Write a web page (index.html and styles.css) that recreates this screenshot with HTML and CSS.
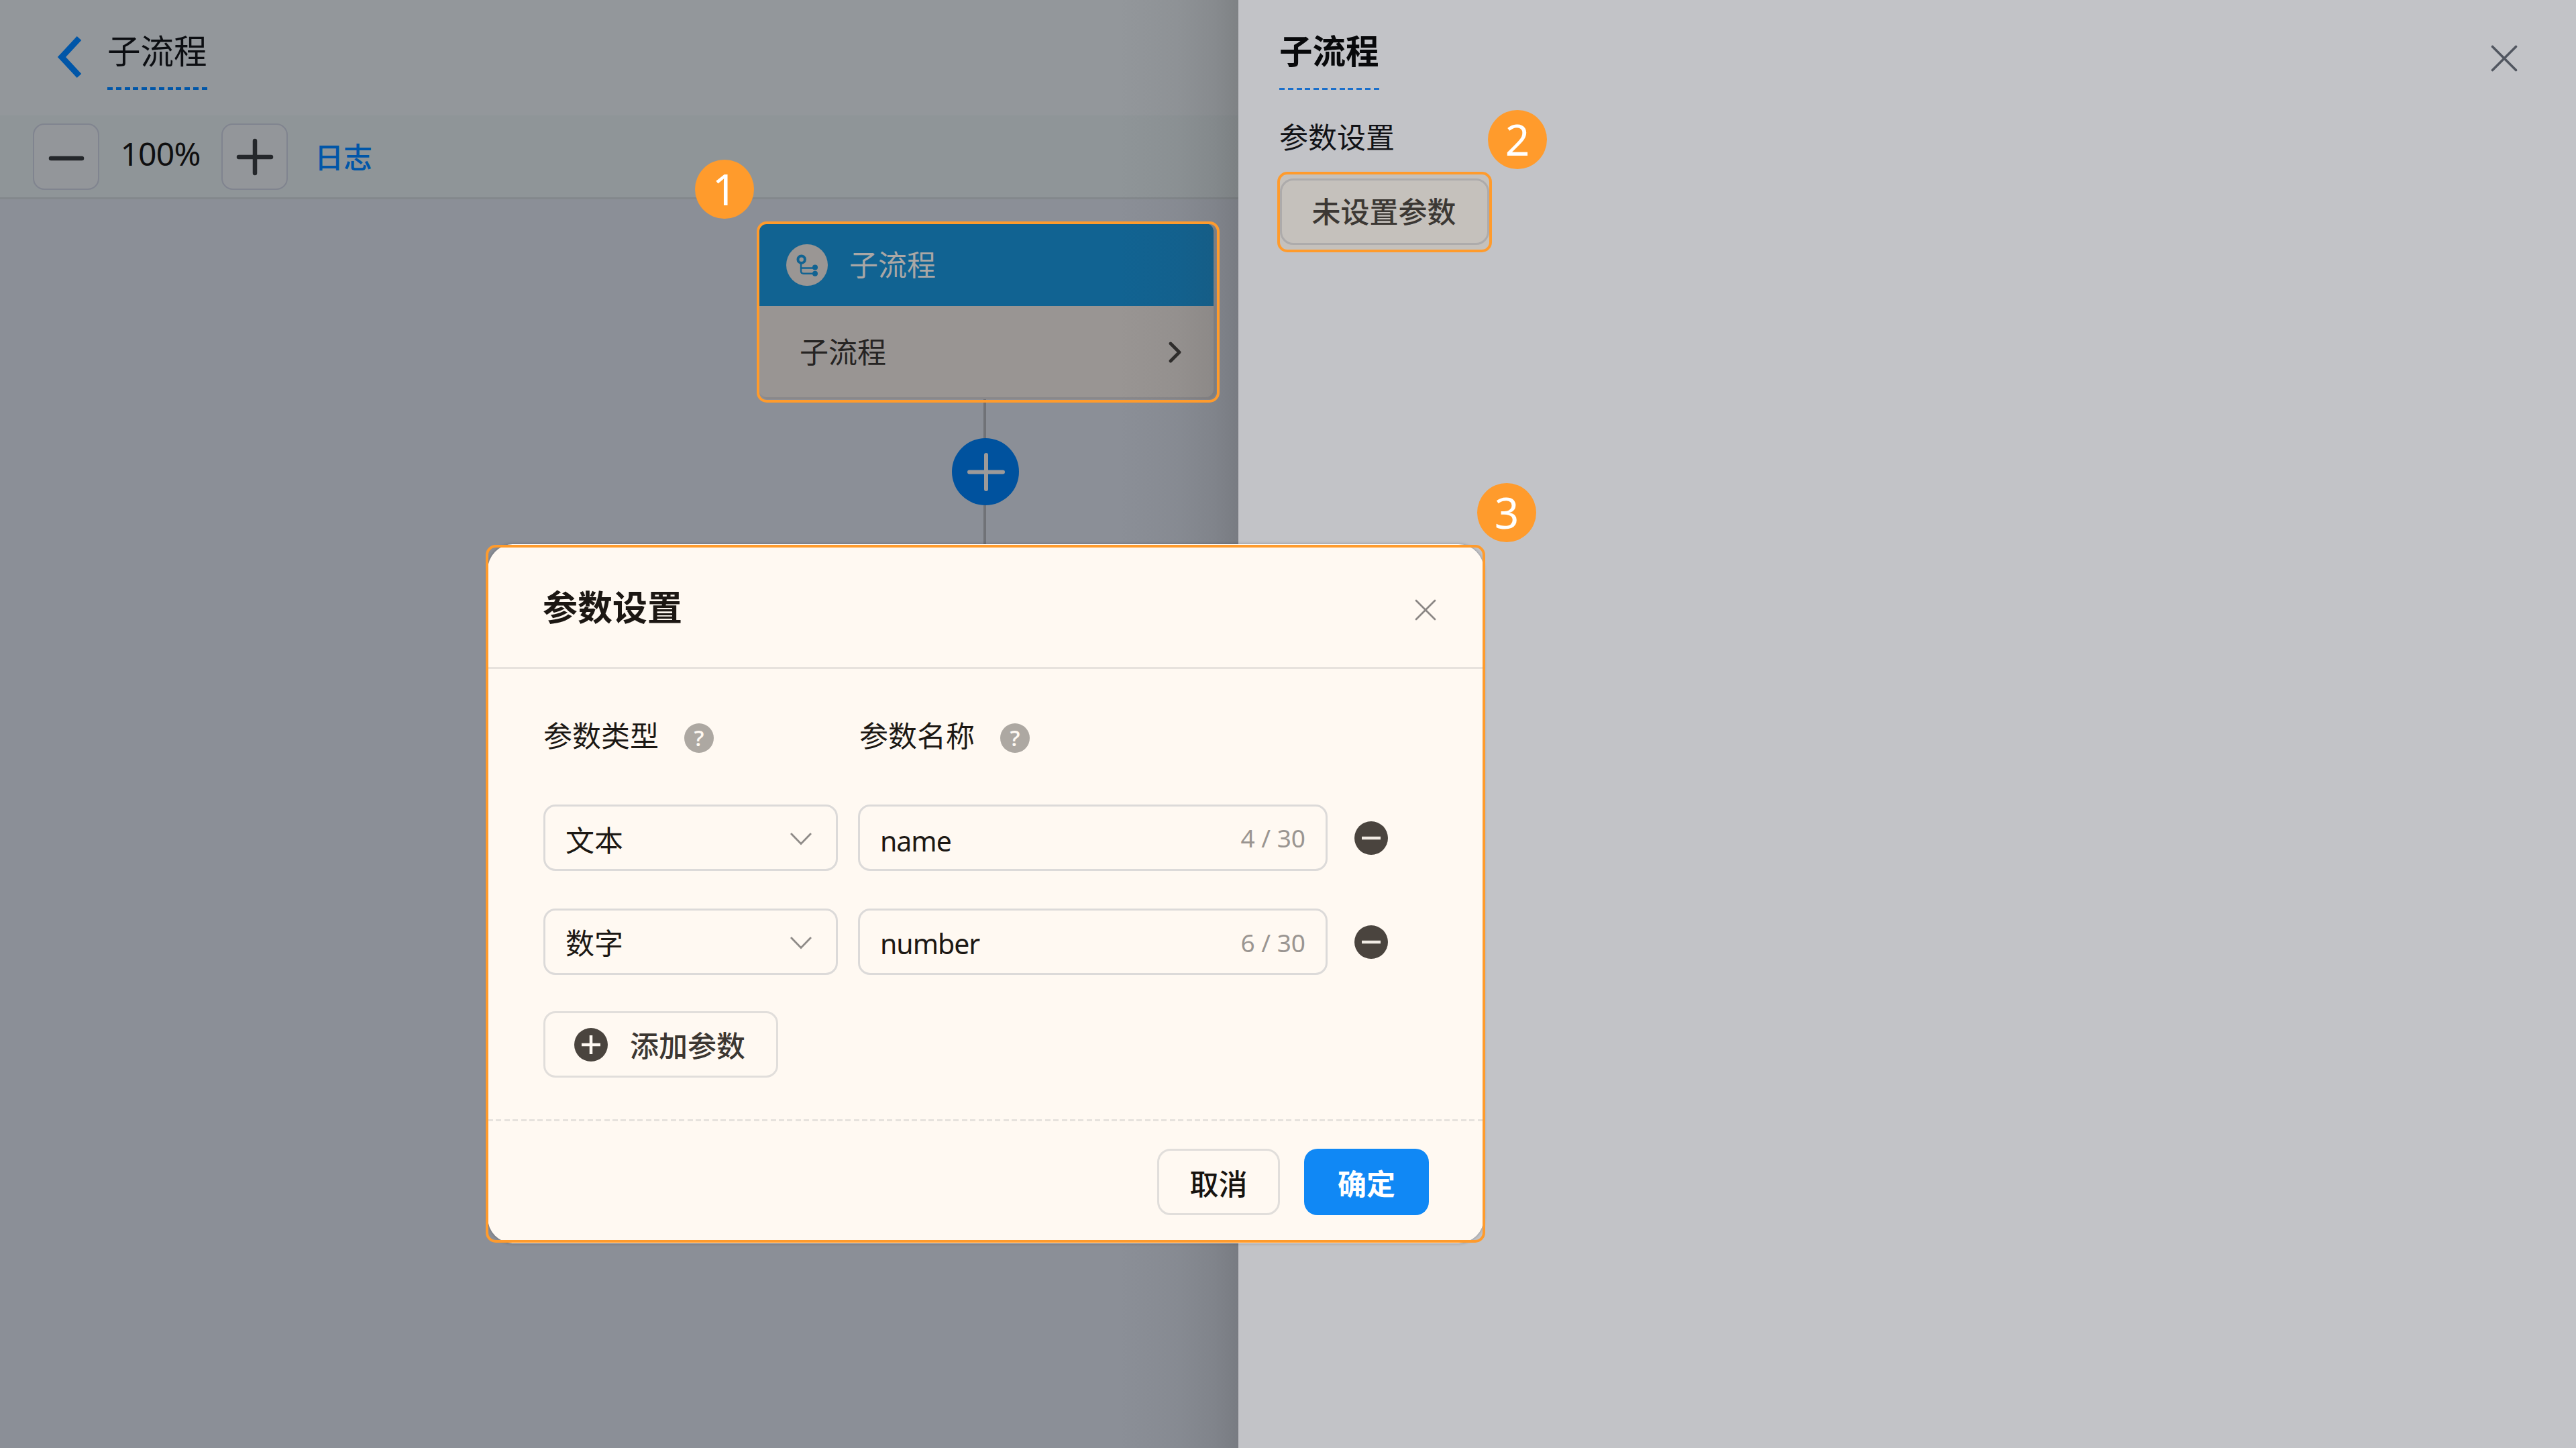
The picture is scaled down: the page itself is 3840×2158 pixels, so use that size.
FILE: index.html
```html
<!DOCTYPE html>
<html lang="zh-CN">
<head>
<meta charset="utf-8">
<title>子流程</title>
<link rel="stylesheet" href="styles.css">
</head>
<body>
<div class="app">
  <main class="editor">
    <header class="topbar">
      <svg class="back" viewBox="0 0 38 64"><path d="M33 4 7 32 33 60" fill="none" stroke="#0056a8" stroke-width="9"/></svg>
      <h1 class="flow-title">子流程</h1>
    </header>
    <div class="toolbar">
      <button class="zoom-btn"><svg viewBox="0 0 60 60"><path d="M7 32H53" stroke="#24272b" stroke-width="6.5" stroke-linecap="round"/></svg></button>
      <span class="zoom-value">100%</span>
      <button class="zoom-btn"><svg viewBox="0 0 60 60"><path d="M6 30H54M30 6V54" stroke="#24272b" stroke-width="6.5" stroke-linecap="round"/></svg></button>
      <a class="log-link">日志</a>
    </div>
    <section class="canvas">
      <div class="connector"></div>
      <div class="node">
        <div class="node-head">
          <svg class="node-icon" viewBox="0 0 62 62">
            <circle cx="31" cy="31" r="31" fill="#9a9694"/>
            <g fill="none" stroke="#116392">
              <circle cx="22.7" cy="22.7" r="5.2" stroke-width="4"/>
              <path d="M22 29V40Q22 43.7 26 43.7H43M22 35.5H43" stroke-width="2.4"/>
            </g>
            <circle cx="43" cy="34.6" r="4" fill="#116392"/>
            <circle cx="43" cy="43.7" r="4" fill="#116392"/>
          </svg>
          <span>子流程</span>
        </div>
        <div class="node-body">
          <span>子流程</span>
          <svg class="node-arrow" viewBox="0 0 20 32"><path d="M3 3 16 16 3 29" fill="none" stroke="#2e2c2b" stroke-width="4.8" stroke-linecap="round" stroke-linejoin="round"/></svg>
        </div>
      </div>
      <svg class="add-node" viewBox="0 0 100 100"><circle cx="50" cy="50" r="50" fill="#00529e"/><path d="M26 50.500H76M51 25V76" stroke="#9d9a99" stroke-width="6" stroke-linecap="round"/></svg>
    </section>
    <div class="edge-shade"></div>
  </main>
  <aside class="drawer">
    <div class="drawer-head">
      <h2 class="drawer-title">子流程</h2>
      <svg class="drawer-close" viewBox="0 0 40 40"><path d="M2.500 2.500 37.500 37.500M37.500 2.500 2.500 37.500" stroke="#515660" stroke-width="3.600" stroke-linecap="round"/></svg>
    </div>
    <div class="drawer-label">参数设置</div>
    <div class="param-frame"><button class="param-btn">未设置参数</button></div>
  </aside>
</div>

<div class="dialog">
  <div class="dialog-head">
    <h2 class="dialog-title">参数设置</h2>
    <svg class="dialog-close" viewBox="0 0 34 34"><path d="M3 3 31 31M31 3 3 31" stroke="#8c8886" stroke-width="2.800" stroke-linecap="round"/></svg>
  </div>
  <div class="dialog-body">
    <div class="grid labels">
      <div class="label">参数类型<span class="help">?</span></div>
      <div class="label">参数名称<span class="help">?</span></div>
    </div>
    <div class="grid row">
      <div class="field select"><span>文本</span><svg class="chev" viewBox="0 0 34 20"><path d="M2 2 17 17.500 32 2" fill="none" stroke="#8f8b88" stroke-width="2.800"/></svg></div>
      <div class="field input"><span>name</span><span class="count">4 / 30</span></div>
      <svg class="remove" viewBox="0 0 50 50"><circle cx="25" cy="25" r="25" fill="#4a443e"/><path d="M11 25H39" stroke="#f2ece5" stroke-width="4.500"/></svg>
    </div>
    <div class="grid row">
      <div class="field select"><span>数字</span><svg class="chev" viewBox="0 0 34 20"><path d="M2 2 17 17.500 32 2" fill="none" stroke="#8f8b88" stroke-width="2.800"/></svg></div>
      <div class="field input"><span>number</span><span class="count">6 / 30</span></div>
      <svg class="remove" viewBox="0 0 50 50"><circle cx="25" cy="25" r="25" fill="#4a443e"/><path d="M11 25H39" stroke="#f2ece5" stroke-width="4.500"/></svg>
    </div>
    <button class="add-param"><svg viewBox="0 0 50 50"><circle cx="25" cy="25" r="25" fill="#4a443e"/><path d="M11 25H39M25 11V39" stroke="#fff9f2" stroke-width="4.500"/></svg><span>添加参数</span></button>
  </div>
  <div class="dialog-foot">
    <button class="btn cancel">取消</button>
    <button class="btn ok">确定</button>
  </div>
</div>

<div class="mark mark-node"></div>
<div class="mark mark-param"></div>
<div class="mark mark-dialog"></div>
<div class="badge badge-1">1</div>
<div class="badge badge-2">2</div>
<div class="badge badge-3">3</div>
</body>
</html>
```
FILE: styles.css
```css
* { box-sizing: border-box; }
html, body { margin: 0; }
body {
  position: relative;
  width: 3840px;
  height: 2158px;
  overflow: hidden;
  font-family: "Noto Sans", "Noto Sans CJK SC", sans-serif;
  font-size: 43px;
  line-height: 60px;
  color: #0f0f10;
}
h1, h2 { margin: 0; font-weight: 400; }
button { margin: 0; padding: 0; font: inherit; background: none; border: 0; }
svg { display: block; flex: none; }
span { white-space: nowrap; }

.app { display: flex; width: 100%; height: 100%; }

/* Flow editor */
.editor {
  position: relative;
  display: flex;
  flex-direction: column;
  width: 1846px;
  background: #8b8f97;
}
.topbar {
  display: flex;
  align-items: flex-start;
  gap: 37px;
  height: 172px;
  padding: 53px 0 0 85px;
  background: #93979b;
}
.back { width: 38px; height: 64px; }
.flow-title, .drawer-title {
  height: 81px;
  line-height: 47px;
  font-size: 49.500px;
}
.flow-title {
  color: #0c0e12;
  background: repeating-linear-gradient(90deg, #0056a8 0 8px, transparent 8px 12.800px) 0 100% / 100% 4px no-repeat;
}
.toolbar {
  display: flex;
  align-items: center;
  height: 125px;
  padding: 1px 0 0 49px;
  background: #8f9598;
  border-bottom: 3px solid #83888c;
}
.zoom-btn {
  display: flex;
  align-items: center;
  justify-content: center;
  width: 99px;
  height: 99px;
  background: #93969a;
  border: 2px solid #80848f;
  border-radius: 17px;
}
.zoom-btn svg { width: 60px; height: 60px; }
.zoom-value {
  width: 182px;
  padding-bottom: 9px;
  text-align: center;
  font-size: 48px;
  letter-spacing: -0.800px;
}
.log-link { margin-left: 40px; padding-top: 2px; color: #0056a8; font-size: 43px; font-weight: 500; }

.canvas { position: relative; flex: 1; }
.connector {
  position: absolute;
  left: 1466px;
  top: 296px;
  width: 4px;
  height: 230px;
  background: #707277;
}
.node {
  position: absolute;
  left: 1131px;
  top: 36px;
  width: 678px;
  height: 259px;
  overflow: hidden;
  background: #999593;
  border-radius: 12px;
  box-shadow: 3px 2px 0 1px #8a888a;
}
.node-head {
  display: flex;
  align-items: center;
  gap: 32px;
  height: 123px;
  padding-left: 41px;
  color: #aaa7a5;
  background: #116392;
}
.node-icon { width: 62px; height: 62px; }
.node-body {
  display: flex;
  align-items: center;
  justify-content: space-between;
  height: 138px;
  padding: 0 47px 0 61px;
  color: #262423;
}
.node-arrow { width: 20px; height: 32px; }
.add-node { position: absolute; left: 1419px; top: 356px; width: 100px; height: 100px; }
.edge-shade {
  position: absolute;
  inset: 0 0 0 auto;
  width: 180px;
  background: linear-gradient(90deg, rgba(50, 50, 50, 0), rgba(50, 50, 50, .05) 50%, rgba(50, 50, 50, .12) 80%, rgba(50, 50, 50, .21));
}

/* Drawer */
.drawer {
  flex: 1;
  padding: 53px 87px 0 61px;
  background: #c2c3c7;
}
.drawer-head { display: flex; justify-content: space-between; align-items: flex-start; }
.drawer-title {
  font-weight: 700;
  color: #08090b;
  background: repeating-linear-gradient(90deg, #1a6fcb 0 8px, transparent 8px 12.800px) 0 100% / 100% 3px no-repeat;
}
.drawer-close { width: 40px; height: 40px; margin-top: 14px; }
.drawer-label { margin-top: 41px; color: #111216; }
.param-frame {
  width: 318px;
  height: 118px;
  margin: 22px 0 0 -2px;
  padding: 9px 2px 10px 3px;
  background: #c5c1bc;
  border-radius: 14px;
}
.param-btn {
  display: block;
  width: 312px;
  height: 99px;
  padding-right: 2px;
  border: 3px solid #adabab;
  border-radius: 20px;
  color: #3c3834;
  font-weight: 500;
}

/* Parameter dialog */
.dialog {
  position: absolute;
  left: 727px;
  top: 811px;
  display: flex;
  flex-direction: column;
  width: 1485px;
  height: 1042px;
  background: #fff9f2;
  border-radius: 38px;
  box-shadow: 0 0 4px rgba(30, 32, 38, .35);
}
.dialog-head {
  display: flex;
  align-items: center;
  justify-content: space-between;
  height: 186px;
  padding: 12px 70px 0 82px;
  border-bottom: 3px solid #e7e2dd;
}
.dialog-title { font-size: 52px; font-weight: 700; color: #1c1713; padding-bottom: 7px; }
.dialog-close { width: 34px; height: 34px; }
.dialog-body {
  display: flex;
  flex-direction: column;
  align-items: flex-start;
  height: 671px;
  padding: 70px 0 0 83px;
  color: #1c1814;
}
.grid { display: grid; grid-template-columns: 439px 700px 50px; column-gap: 30px; align-items: center; }
.labels { margin-bottom: 72px; }
.label { display: flex; align-items: center; }
.label + .label { padding-left: 2px; }
.help {
  width: 44px;
  height: 44px;
  margin: 6px 0 0 38px;
  border-radius: 50%;
  background: #ada8a2;
  color: #fff9f2;
  font: 600 33px/44px "Open Sans", sans-serif;
  text-align: center;
}
.row { margin-bottom: 56px; }
.field {
  display: flex;
  align-items: center;
  justify-content: space-between;
  height: 99px;
  padding: 8px 35px 0 30px;
  border: 3px solid #dcdad9;
  border-radius: 18px;
}
.row + .row .field { padding-top: 4px; }
.input { padding-right: 30px; font-size: 41px; letter-spacing: -1px; }
.count { margin-top: -8px; color: #9a9591; font-size: 37px; letter-spacing: 0; }
.row + .row .count { margin-top: -1px; }
.chev { width: 34px; height: 20px; margin-top: -5px; }
.row + .row .chev { margin-top: -2px; }
.remove { width: 50px; height: 50px; margin-left: 10px; }
.add-param {
  display: flex;
  align-items: center;
  gap: 33px;
  width: 350px;
  height: 99px;
  margin-top: -2px;
  padding-left: 43px;
  border: 3px solid #e1dedb;
  border-radius: 18px;
  color: #3c3732;
  font-weight: 500;
}
.add-param svg { width: 50px; height: 50px; }
.add-param span { padding-top: 5px; }
.dialog-foot {
  display: flex;
  justify-content: flex-end;
  gap: 36px;
  flex: 1;
  padding: 44px 82px 0 0;
  background: repeating-linear-gradient(90deg, #e6e2dd 0 8px, transparent 8px 12.400px) 0 0 / 100% 3px no-repeat;
}
.btn {
  width: 186px;
  height: 99px;
  padding-top: 6px;
  border-radius: 20px;
  font-weight: 500;
}
.cancel { width: 183px; border: 3px solid #e1dedb; color: #17130f; }
.ok { background: #1088f5; color: #fff; font-weight: 700; }

/* Callouts */
.mark {
  position: absolute;
  border: 4px solid #ff9b2c;
  border-radius: 15px;
}
.mark-node { left: 1128px; top: 330px; width: 690px; height: 270px; }
.mark-param { left: 1904px; top: 256px; width: 320px; height: 120px; }
.mark-dialog { left: 724px; top: 812px; width: 1490px; height: 1040px; }
.badge {
  position: absolute;
  width: 88px;
  height: 88px;
  border-radius: 50%;
  background: #ff9b2c;
  color: #fff;
  font-size: 64px;
  line-height: 88px;
  text-align: center;
}
.badge-1 { left: 1036px; top: 238px; }
.badge-2 { left: 2218px; top: 164px; }
.badge-3 { left: 2202px; top: 720px; }
```
